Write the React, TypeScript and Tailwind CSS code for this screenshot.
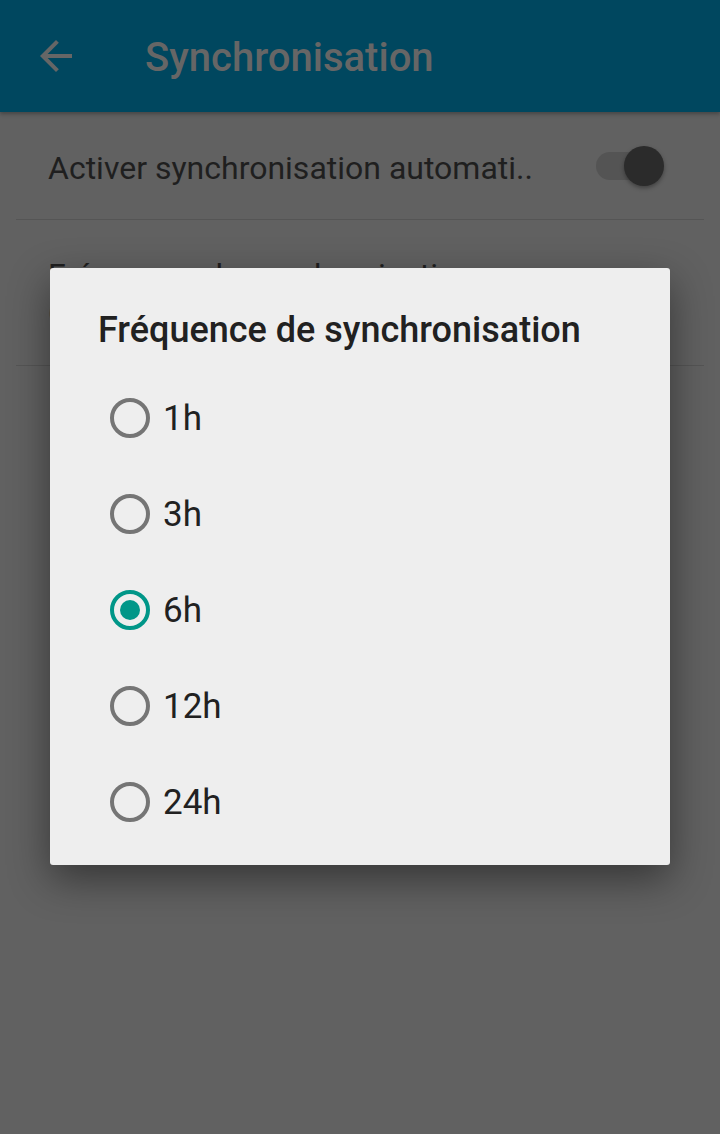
import React from 'react';

const options = ['1h', '3h', '6h', '12h', '24h'];
const selected = '6h';

const Radio: React.FC<{ checked: boolean }> = ({ checked }) => (
  <span
    className={
      'flex h-[40px] w-[40px] shrink-0 items-center justify-center rounded-full border-[4px] ' +
      (checked ? 'border-[#009688]' : 'border-[#757575]')
    }
  >
    {checked && <span className="h-[20px] w-[20px] rounded-full bg-[#009688]" />}
  </span>
);

const App: React.FC = () => {
  return (
    <div
      className="relative h-[1134px] w-[720px] overflow-hidden bg-[#616161]"
      style={{ fontFamily: 'Roboto, "Noto Sans", sans-serif' }}
    >
      <header className="flex h-[112px] items-center bg-[#00475f] shadow-[0_2px_4px_rgba(0,0,0,0.3)]">
        <svg viewBox="0 0 24 24" className="ml-[32px] h-[48px] w-[48px]" fill="#666666">
          <path d="M20 11H7.83l5.59-5.59L12 4l-8 8 8 8 1.41-1.41L7.83 13H20v-2z" />
        </svg>
        <h1 className="ml-[65px] pt-[4px] text-[40px] font-medium text-[#666666]">Synchronisation</h1>
      </header>

      <main>
        <div className="flex h-[107px] items-center justify-between pl-[48px] pr-[56px]">
          <span className="pt-[4px] text-[32px] text-[#1f1f1f]">Activer synchronisation automati..</span>
          <span className="relative flex h-[40px] w-[70px] items-center">
            <span className="ml-[2px] h-[28px] w-[58px] rounded-full bg-[#545454]" />
            <span className="absolute right-0 top-0 h-[40px] w-[40px] rounded-full bg-[#2b2b2b] shadow-[0_2px_4px_rgba(0,0,0,0.35)]" />
          </span>
        </div>
        <div className="mx-[16px] h-px bg-[#555555]" />
        <div className="flex h-[145px] flex-col justify-center px-[48px]">
          <span className="text-[32px] leading-[40px] text-[#1f1f1f]">Fréquence de synchronisation</span>
          <span className="text-[28px] leading-[36px] text-[#3a3a3a]">6h</span>
        </div>
        <div className="mx-[16px] h-px bg-[#555555]" />
      </main>

      <div className="absolute left-[50px] top-[268px] w-[620px] rounded-[3px] bg-[#eeeeee] pb-[16px] pt-[42px] shadow-[0_14px_40px_rgba(0,0,0,0.45)]">
        <h2 className="pl-[48px] text-[36px] font-medium leading-[40px] text-[#212121]">
          Fréquence de synchronisation
        </h2>
        <ul className="mt-[19px]">
          {options.map((o) => (
            <li key={o} className="flex h-[96px] items-center gap-[13px] pl-[60px] pt-[2px]">
              <Radio checked={o === selected} />
              <span className="pt-[3px] text-[35px] text-[#212121]">{o}</span>
            </li>
          ))}
        </ul>
      </div>
    </div>
  );
};

export default App;
